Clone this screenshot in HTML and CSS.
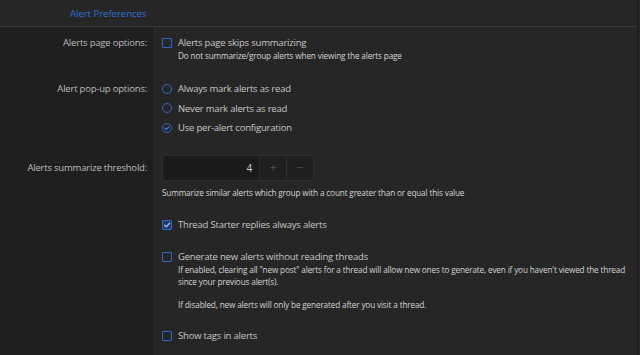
FILE: index.html
```html
<!DOCTYPE html>
<html>
<head>
<meta charset="utf-8">
<link rel="stylesheet" href="styles.css">
</head>
<body>
<div class="page">
  <div class="header"><span class="header-title">Alert Preferences</span></div>

  <div class="row row-first">
    <div class="dt">Alerts page options:</div>
    <div class="dd">
      <div class="opt"><span class="box"></span><span>Alerts page skips summarizing</span></div>
      <div class="hint">Do not summarize/group alerts when viewing the alerts page</div>
    </div>
  </div>

  <div class="row row-radios">
    <div class="dt dt-radio">Alert pop-up options:</div>
    <div class="dd">
      <div class="opt radio-opt"><span class="circle"></span><span>Always mark alerts as read</span></div>
      <div class="opt radio-opt"><span class="circle"></span><span>Never mark alerts as read</span></div>
      <div class="opt radio-opt"><span class="circle checked"><svg viewBox="0 0 10 10" width="10" height="10"><path d="M2.9 5.1 L4.4 6.5 L7.2 3.6" fill="none" stroke="#3f7be0" stroke-width="1.2" stroke-linecap="round" stroke-linejoin="round"/></svg></span><span>Use per-alert configuration</span></div>
    </div>
  </div>

  <div class="row row-threshold">
    <div class="dt dt-input">Alerts summarize threshold:</div>
    <div class="dd">
      <div class="spinner">
        <div class="spin-value">4</div>
        <div class="spin-btn">+</div>
        <div class="spin-btn">&minus;</div>
      </div>
      <div class="hint hint-below">Summarize similar alerts which group with a count greater than or equal this value</div>
    </div>
  </div>

  <div class="row">
    <div class="dt"></div>
    <div class="dd">
      <div class="opt"><span class="box checked"><svg viewBox="0 0 10 10" width="10" height="10"><path d="M2.6 5.2 L4.3 6.8 L7.6 3.3" fill="none" stroke="#9fb9e6" stroke-width="1.3" stroke-linecap="round" stroke-linejoin="round"/></svg></span><span>Thread Starter replies always alerts</span></div>
    </div>
  </div>

  <div class="row">
    <div class="dt"></div>
    <div class="dd">
      <div class="opt"><span class="box"></span><span>Generate new alerts without reading threads</span></div>
      <div class="hint">If enabled, clearing all "new post" alerts for a thread will allow new ones to generate, even if you haven't viewed the thread since your previous alert(s).</div>
      <div class="hint hint-para">If disabled, new alerts will only be generated after you visit a thread.</div>
    </div>
  </div>

  <div class="row row-last">
    <div class="dt"></div>
    <div class="dd">
      <div class="opt"><span class="box"></span><span>Show tags in alerts</span></div>
    </div>
  </div>
</div>
</body>
</html>
```

FILE: styles.css
```css
* { box-sizing: border-box; }
html, body {
  margin: 0;
  padding: 0;
  background: #262626;
  height: 355px;
  overflow: hidden;
}
body {
  font-family: "Open Sans", "Noto Sans", sans-serif;
  color: #c2c2c2;
  font-size: 9.5px;
  letter-spacing: -0.2px;
}
.page {
  width: 638px;
  height: 355px;
  overflow: hidden;
  background: #262626;
  border-right: 1px solid #1a1a1a;
  display: flex;
  flex-direction: column;
}
.header {
  height: 27px;
  flex: none;
  border-bottom: 1px solid #383838;
  padding-left: 70px;
  display: flex;
  align-items: center;
  background: #262626;
}
.header-title {
  color: #3070d4;
  font-size: 9.5px;
  letter-spacing: 0;
}
.row {
  display: flex;
  flex: none;
}
.dt {
  width: 155px;
  flex: none;
  background: #1f1f1f;
  border-right: 1px solid #2c2c2c;
  text-align: right;
  padding: 9px 7px 9px 0;
  line-height: 14px;
  color: #bdbdbd;
}
.dd {
  flex: 1;
  padding: 9px 8px 9px 7px;
}
.row-first .dd { padding-bottom: 8px; }
.row-first .dt { padding-bottom: 8px; }
.dt-radio { line-height: 19.5px; }
.row-last { flex: 1; }
.opt {
  display: flex;
  align-items: center;
  gap: 6px;
  line-height: 14px;
  color: #c6c6c6;
}
.radio-opt { line-height: 19.5px; }
.box {
  width: 10px;
  height: 10px;
  border: 1.5px solid #2f66c4;
  border-radius: 1px;
  flex: none;
  display: flex;
  align-items: center;
  justify-content: center;
}
.box.checked {
  background: #233c66;
}
.box svg, .circle svg { flex: none; }
.circle {
  width: 10px;
  height: 10px;
  border: 1.3px solid #2f66c4;
  border-radius: 50%;
  flex: none;
  display: flex;
  align-items: center;
  justify-content: center;
}
.hint {
  font-size: 8.2px;
  letter-spacing: -0.15px;
  line-height: 12px;
  color: #d4d4d4;
  padding-left: 16px;
}
.hint-below {
  padding-left: 0;
  margin-top: 6px;
}
.hint-para { margin-top: 11px; }
.row-threshold .dt, .row-threshold .dd { padding-top: 8px; padding-bottom: 10px; }
.dt-input { line-height: 26px; }
.spinner {
  display: flex;
  width: 152px;
  height: 26px;
  border: 1px solid #2d2d2d;
  border-radius: 3px;
  background: #1b1b1b;
  overflow: hidden;
}
.spin-value {
  flex: 1;
  text-align: right;
  padding-right: 7px;
  line-height: 24px;
  color: #d0d0d0;
  font-size: 10px;
}
.spin-btn {
  width: 27px;
  border-left: 1px solid #2d2d2d;
  background: #1f1f1f;
  color: #4d4d4d;
  text-align: center;
  line-height: 24px;
  font-size: 12px;
}
```
